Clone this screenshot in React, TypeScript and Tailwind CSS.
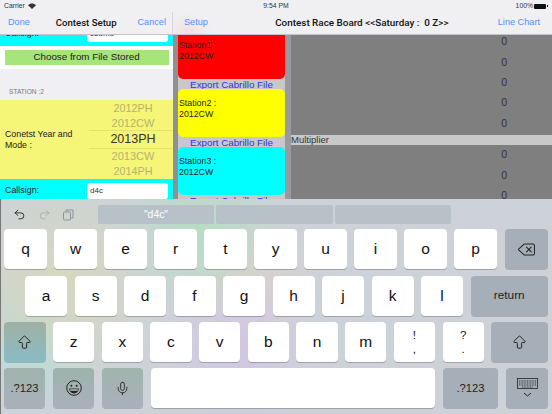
import { ReactNode } from 'react';
import { ArrowBigUp, Delete, Mic, Redo2, Undo2 } from 'lucide-react';

const font = 'font-["Liberation_Sans",Arial,sans-serif]';
const titleFont = 'font-[Roboto,sans-serif] font-medium';

function Key({ className, children }: { className: string; children?: ReactNode }) {
  return (
    <div className={`flex h-[40px] shrink-0 items-center justify-center rounded-[4px] bg-white text-[#111] shadow-[0_1px_0_rgba(90,90,100,0.4)] ${className}`}>
      {children}
    </div>
  );
}

function LetterKey({ letter, className }: { letter: string; className: string }) {
  return <Key className={`text-[15.5px] ${className}`}>{letter}</Key>;
}

function PunctKey({ top, bottom }: { top: string; bottom: string }) {
  return (
    <Key className="w-[41.2px] flex-col">
      <span className="text-[11.5px] leading-[14px]">{top}</span>
      <span className="text-[11.5px] leading-[14px]">{bottom}</span>
    </Key>
  );
}

function GrayKey({ className, children }: { className: string; children: ReactNode }) {
  return (
    <div className={`flex h-[40px] shrink-0 items-center justify-center rounded-[4px] bg-[#0a1e30]/20 text-[#222] shadow-[0_1px_0_rgba(90,90,100,0.3)] ${className}`}>
      {children}
    </div>
  );
}

function KeyboardIcon() {
  return (
    <svg width="21" height="20" viewBox="0 0 21 20" fill="none" stroke="#222" strokeWidth="0.8">
      <rect x="0.5" y="0.5" width="20" height="10" />
      <path d="M2 3h17M2 5h17M2 7h17M5 9h11" strokeDasharray="1 0.6" />
      <path d="M7 15l3.5 3 3.5-3" strokeWidth="1" />
    </svg>
  );
}

function EmojiIcon() {
  return (
    <svg width="16" height="16" viewBox="0 0 16 16" fill="none" stroke="#222" strokeWidth="1">
      <circle cx="8" cy="8" r="7.3" />
      <circle cx="5.4" cy="5.8" r="1" fill="#222" stroke="none" />
      <circle cx="10.6" cy="5.8" r="1" fill="#222" stroke="none" />
      <path d="M3.2 8.6h9.6c0 3-2.2 4.8-4.8 4.8s-4.8-1.8-4.8-4.8z" fill="#222" stroke="none" />
      <path d="M4.2 9.4h7.6v1.2H4.2z" fill="#e8ecec" stroke="none" />
    </svg>
  );
}

function StationCard({ name, className }: { name: string; className: string }) {
  return (
    <>
      <div className={`flex shrink-0 flex-col justify-center px-px text-[8.8px] leading-[11px] text-[#222] ${className}`}>
        <span>{name} :</span>
        <span>2012CW</span>
      </div>
      <div className="h-[10px] shrink-0 pt-px text-center text-[9.8px] leading-[10px] text-[#3030f0]">Export Cabrillo File</div>
    </>
  );
}

function ScoreRow() {
  return <div className="flex h-[20.4px] shrink-0 items-center justify-end pr-[45px] text-[10.5px] text-[#333]">0</div>;
}

function CallsignRow({ value, className }: { value: string; className: string }) {
  return (
    <div className={`flex h-[24px] shrink-0 items-center bg-[#00ffff] px-[5px] ${className}`}>
      <span className="flex-1 text-[8.9px] text-[#222]">Callsign:</span>
      <div className="flex h-[16px] w-[81px] items-center rounded-[3px] bg-white px-[3px] text-[8px] text-[#333]">{value}</div>
    </div>
  );
}

function LeftPane() {
  return (
    <div className="flex h-[164px] w-[173px] shrink-0 flex-col overflow-hidden bg-[#efeff4]">
      <CallsignRow value="s8bmd" className="-mt-[13px]" />
      <div className="flex h-[23px] shrink-0 items-center justify-center bg-white">
        <div className="flex h-[15px] w-[164px] items-center justify-center bg-[#a6e57a] text-[9.8px] text-[#222]">Choose from File Stored</div>
      </div>
      <div className="flex h-[31px] shrink-0 items-end pb-[3px] pl-[9px] text-[6.6px] text-[#777]">STATION :2</div>
      <div className="flex h-[79px] shrink-0 items-center bg-[#f5f578] pl-[5px]">
        <div className="w-[84px] text-[8.8px] leading-[11px] text-[#222]">Conetst Year and Mode :</div>
        <div className="flex flex-1 flex-col items-center text-[#b4b46c]">
          <div className="flex h-[16px] items-center pl-[4px] text-[10.8px]">2012PH</div>
          <div className="flex h-[14px] items-center pl-[4px] text-[11px]">2012CW</div>
          <div className="flex h-[19px] w-full items-center justify-center border-y border-[#e2e26c] pl-[4px] text-[12.5px] text-[#333]">2013PH</div>
          <div className="flex h-[14px] items-center pl-[4px] text-[11px]">2013CW</div>
          <div className="flex h-[16px] items-center pl-[4px] text-[10.8px]">2014PH</div>
        </div>
      </div>
      <CallsignRow value="d4c" className="" />
    </div>
  );
}

function RightPane() {
  return (
    <div className="flex h-[164px] flex-1 overflow-hidden bg-[#c8c8c8]">
      <div className="w-[5px] shrink-0 bg-[#909090]" />
      <div className="flex w-[107px] shrink-0 flex-col overflow-hidden">
        <StationCard name="Station1" className="-mt-[13px] h-[57px] rounded-b-[5px] bg-[#ff0000]" />
        <StationCard name="Station2" className="h-[48px] rounded-[5px] bg-[#ffff00] pb-[9px]" />
        <StationCard name="Station3" className="h-[48px] rounded-[5px] bg-[#00ffff] pb-[9px]" />
      </div>
      <div className="w-[6px] shrink-0 bg-[#9a9a9e]" />
      <div className="flex flex-1 flex-col overflow-hidden bg-[#7f7f7f]">
        <div className="-mt-[3px] shrink-0">
          <ScoreRow />
          <ScoreRow />
          <ScoreRow />
          <ScoreRow />
          <ScoreRow />
        </div>
        <div className="mt-[1px] flex h-[10px] shrink-0 items-center bg-[#c8c8c8] text-[9.5px] text-[#333]">Multiplier</div>
        <ScoreRow />
        <ScoreRow />
        <ScoreRow />
      </div>
    </div>
  );
}

function TopBars() {
  return (
    <div className="bg-[#f0f0f2]">
      <div className="flex h-[12px] items-center justify-between px-[4px] text-[6.8px] text-[#333]">
        <div className="flex w-[100px] items-center gap-[3px]">
          Carrier
          <svg width="8" height="6" viewBox="0 0 8 6" fill="#333">
            <path d="M4 6L0 2.2C2.2 0 5.8 0 8 2.2z" />
          </svg>
        </div>
        <span>9:54 PM</span>
        <div className="flex w-[100px] items-center justify-end gap-[1px]">
          100%
          <div className="h-[5px] w-[12px] rounded-[1px] bg-[#111]" />
          <div className="h-[2px] w-[1px] bg-[#111]" />
        </div>
      </div>
      <div className="flex h-[23px] border-b border-[#c4c4c8] text-[9.16px]">
        <div className="flex w-[173px] shrink-0 items-center justify-between border-r border-[#d8d8dc] pl-[8px] pr-[6px] text-[#4a94f8]">
          <span>Done</span>
          <span className={`ml-[5px] text-[9.6px] text-[#111] ${titleFont}`}>Contest Setup</span>
          <span>Cancel</span>
        </div>
        <div className="flex flex-1 items-center justify-between bg-[radial-gradient(circle_at_16px_24px,#f5dcdc_0,transparent_24px)] pl-[11px] pr-[12px] text-[#4a94f8]">
          <span className="w-[42px]">Setup</span>
          <span className={`text-[9.9px] text-[#111] ${titleFont}`}>Contest Race Board &lt;&lt;Saturday :&nbsp; 0 Z&gt;&gt;</span>
          <span>Line Chart</span>
        </div>
      </div>
    </div>
  );
}

function Keyboard() {
  return (
    <div className="flex h-[215px] flex-col bg-[#cdd2d9] bg-[radial-gradient(circle_at_200px_30px,#b8dcc4_0,transparent_90px),radial-gradient(circle_at_60px_85px,#d6d8bc_0,transparent_110px),radial-gradient(circle_at_30px_150px,#b4dede_0,transparent_70px),radial-gradient(circle_at_240px_150px,#d2c6e4_0,transparent_85px),radial-gradient(circle_at_250px_85px,#dcd0c8_0,transparent_70px)] pt-[6px] shadow-[inset_1px_0_0_#777]">
      <div className="flex h-[19px] items-center">
        <div className="flex w-[98px] shrink-0 items-center pl-[13px]">
          <Undo2 size={13} color="#111" strokeWidth={1.5} />
          <Redo2 size={13} color="#9aa4a8" strokeWidth={1.3} className="ml-[12px]" />
          <svg width="11" height="12" viewBox="0 0 11 12" fill="none" stroke="#8a9498" className="ml-[12px]">
            <rect x="0.5" y="3" width="7" height="8" rx="1" />
            <path d="M3 3V1h7v8H8" />
          </svg>
        </div>
        <div className="flex h-[19px] w-[116px] items-center justify-center rounded-[2px] bg-[#b9c1c8] text-[10.4px] text-white">"d4c"</div>
        <div className="ml-[2px] h-[19px] w-[117px] rounded-[2px] bg-[#b9c1c8]" />
        <div className="ml-[2px] h-[19px] w-[116px] rounded-[2px] bg-[#b9c1c8]" />
      </div>

      <div className="mt-[5px] flex gap-[7px] pl-[4px]">
        {['q', 'w', 'e', 'r', 't', 'y', 'u', 'i', 'o', 'p'].map((k) => (
          <LetterKey key={k} letter={k} className="w-[43px]" />
        ))}
        <GrayKey className="ml-px w-[43px]"><Delete size={19} strokeWidth={1.3} /></GrayKey>
      </div>

      <div className="mt-[6.5px] flex gap-[7.5px] pl-[25px]">
        {['a', 's', 'd', 'f', 'g', 'h', 'j', 'k', 'l'].map((k) => (
          <LetterKey key={k} letter={k} className="w-[42px]" />
        ))}
        <GrayKey className="w-[77.5px] text-[11.8px]">return</GrayKey>
      </div>

      <div className="mt-[6.5px] flex gap-[7.5px] pl-[4px]">
        <GrayKey className="w-[41.5px] bg-[linear-gradient(#a0b0a4,#88bcc4)]"><ArrowBigUp size={17} strokeWidth={1.4} /></GrayKey>
        {['z', 'x', 'c', 'v', 'b', 'n', 'm'].map((k) => (
          <LetterKey key={k} letter={k} className="w-[41.2px]" />
        ))}
        <PunctKey top="!" bottom="," />
        <PunctKey top="?" bottom="." />
        <GrayKey className="w-[57px]"><ArrowBigUp size={17} strokeWidth={1.4} /></GrayKey>
      </div>

      <div className="mt-[6px] flex pl-[4px]">
        <GrayKey className="w-[41px] bg-[linear-gradient(#a0b4ac,#aab0bc)] text-[11.2px]">.?123</GrayKey>
        <GrayKey className="ml-[8px] w-[41px] bg-[linear-gradient(#9cb4aa,#aab0bc)]"><EmojiIcon /></GrayKey>
        <GrayKey className="ml-[8px] w-[41px] bg-[linear-gradient(#a0b4ac,#aab0bc)]"><Mic size={15} strokeWidth={1.4} /></GrayKey>
        <Key className="ml-[8px] w-[284px]" />
        <GrayKey className="ml-[8px] w-[55px] text-[11.2px]">.?123</GrayKey>
        <GrayKey className="ml-[8px] w-[42px]"><KeyboardIcon /></GrayKey>
      </div>
    </div>
  );
}

export default function App() {
  return (
    <div className={`flex h-[414px] w-[552px] flex-col overflow-hidden ${font}`}>
      <TopBars />
      <div className="flex h-[164px] shrink-0">
        <LeftPane />
        <RightPane />
      </div>
      <Keyboard />
    </div>
  );
}
